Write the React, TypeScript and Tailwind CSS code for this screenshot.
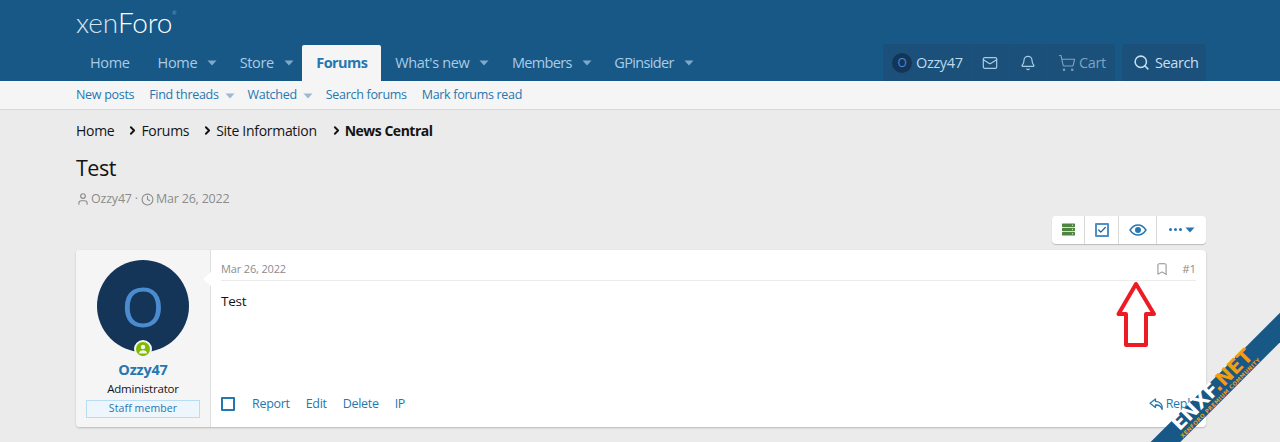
import React from "react";
import { Mail, Bell, ShoppingCart, Search, User, Clock, Bookmark, Check, ChevronRight } from "lucide-react";

const Caret = ({ className = "" }: { className?: string }) => (
  <svg viewBox="0 0 10 6" width="10" height="6" className={className} fill="currentColor"><path d="M0.5 0.5h9L5 5.5z" /></svg>
);

const NavItem = ({ label, caret, tight }: { label: string; caret?: boolean; tight?: boolean }) => (
  <div className={tight ? "flex h-[36px] items-center pl-[14px] pr-[14px] text-[14.5px] tracking-[-0.65px] text-[#a9cce6]" : "flex h-[36px] items-center pl-[14px] pr-[14px] text-[14.5px] tracking-[-0.35px] text-[#a9cce6]"}>
    <span>{label}</span>
    {caret && <Caret className="ml-[10px] mr-[-5.5px] text-[#7fa9c9]" />}
  </div>
);

const SubItem = ({ label, caret }: { label: string; caret?: boolean }) => (
  <div className="flex items-center text-[12.5px] tracking-[-0.3px] text-[#2577b1]">
    <span>{label}</span>
    {caret && <Caret className="ml-[6px] mr-[-2px] text-[#9db9d0]" />}
  </div>
);

const Crumb = ({ label, bold }: { label: string; bold?: boolean }) => (
  <div className={bold ? "ml-[1px] flex items-center" : "flex items-center"}>
    <ChevronRight size={13} strokeWidth={3.5} className="mr-[2px] text-[#141414]" />
    <span className={bold ? "font-bold tracking-[-0.5px] text-[#141414]" : "text-[#141414]"}>{label}</span>
  </div>
);

export default function App() {
  return (
    <div className="relative h-[442px] w-[1280px] overflow-hidden bg-[#ebebeb] font-['Open_Sans','Noto_Sans',sans-serif] text-[#141414]">
      <header className="bg-[#185886]">
        <div className="flex h-[45px] items-start pl-[76px] pt-[5px]">
          <div className="flex items-start font-['Lato',sans-serif] text-[28px] font-light leading-[34px] tracking-[-0.2px] text-[#d6e4ee]">
            <span>xen</span>
            <span className="text-white">Foro</span>
            <span className="mt-[5px] text-[5px] leading-[6px] text-[#c4d7e5]">®</span>
          </div>
        </div>
        <div className="flex h-[36px] items-end justify-between pl-[76px] pr-[74px]">
          <nav className="flex items-center">
            <NavItem label="Home" />
            <NavItem label="Home" caret />
            <NavItem label="Store" caret />
            <div className="flex h-[36px] items-center rounded-t-[2px] bg-[#f5f5f5] px-[14px] text-[14.5px] font-bold tracking-[-0.6px] text-[#2577b1]">Forums</div>
            <NavItem label="What's new" caret />
            <NavItem label="Members" caret tight />
            <NavItem label="GPinsider" caret tight />
          </nav>
          <div className="flex h-[37px] items-stretch gap-[7px]">
            <div className="flex rounded-t-[4px] bg-[#1a5079] text-[14.5px] tracking-[-0.35px] text-[#a9cce6]">
              <div className="flex w-[89px] items-center border-r border-[#185886]/40 pl-[9px]">
                <span className="mr-[4px] flex h-[20px] w-[20px] items-center justify-center rounded-full bg-[#153558] text-[12px] text-[#4a8ccf]">O</span>
                <span className="text-[#bcd9ee]">Ozzy47</span>
              </div>
              <div className="flex w-[37px] items-center justify-center border-r border-[#185886]/40"><Mail size={16} strokeWidth={1.8} /></div>
              <div className="flex w-[39px] items-center justify-center border-r border-[#185886]/40"><Bell size={16} strokeWidth={1.8} /></div>
              <div className="flex w-[67px] items-center gap-[3px] pl-[10px] text-[#7fa3bf]"><ShoppingCart size={18} strokeWidth={1.5} /><span>Cart</span></div>
            </div>
            <div className="flex w-[84px] items-center gap-[5px] rounded-t-[4px] bg-[#1a5079] pl-[11px] text-[14.5px] tracking-[-0.4px] text-[#c6dff1]">
              <Search size={17} strokeWidth={2.2} />
              <span>Search</span>
            </div>
          </div>
        </div>
      </header>

      <div className="flex h-[29px] items-center gap-[15px] border-b border-[#d8d8d8] bg-[#f5f5f5] pl-[76px] pt-[1px]">
        <SubItem label="New posts" />
        <SubItem label="Find threads" caret />
        <SubItem label="Watched" caret />
        <SubItem label="Search forums" />
        <SubItem label="Mark forums read" />
      </div>

      <main className="px-[76px] pr-[74px]">
        <div className="flex h-[41px] items-center gap-[12px] text-[14px] tracking-[-0.3px]">
          <span>Home</span>
          <Crumb label="Forums" />
          <Crumb label="Site Information" />
          <Crumb label="News Central" bold />
        </div>
        <h1 className="mt-[1px] text-[21.5px] leading-[32px] tracking-[-0.5px] text-[#141414]">Test</h1>
        <div className="mt-[6px] flex items-center gap-[1px] text-[12.5px] tracking-[-0.2px] text-[#8c8c8c]">
          <User size={14} strokeWidth={2} />
          <span>Ozzy47 ·</span>
          <Clock size={13} strokeWidth={2} className="ml-[2px]" />
          <span className="ml-[1px]">Mar 26, 2022</span>
        </div>

        <div className="mt-[7px] flex justify-end">
          <div className="flex h-[28px] items-stretch rounded-[4px] bg-white shadow-[0_1px_1px_rgba(0,0,0,0.2)]">
            <div className="flex w-[33px] items-center justify-center border-r border-[#d8d8d8]">
              <svg width="13" height="13" viewBox="0 0 13 13"><rect x="0" y="0.5" width="13" height="3.4" rx="0.6" fill="#4f8440" /><rect x="0" y="4.8" width="13" height="3.4" rx="0.6" fill="#4f8440" /><rect x="0" y="9.1" width="13" height="3.4" rx="0.6" fill="#4f8440" /><circle cx="10.5" cy="2.2" r="0.7" fill="#cfe3c9" /><circle cx="10.5" cy="6.5" r="0.7" fill="#cfe3c9" /><circle cx="10.5" cy="10.8" r="0.7" fill="#cfe3c9" /></svg>
            </div>
            <div className="flex w-[34px] items-center justify-center border-r border-[#d8d8d8]">
              <div className="flex h-[14px] w-[14px] items-center justify-center rounded-[1px] border-2 border-[#4f8fc8] text-[#1f5f94]"><Check size={10} strokeWidth={3} /></div>
            </div>
            <div className="flex w-[38px] items-center justify-center border-r border-[#d8d8d8]">
              <svg width="18" height="12" viewBox="0 0 18 12" fill="none"><path d="M1 6c2-3 5-5 8-5s6 2 8 5c-2 3-5 5-8 5s-6-2-8-5z" stroke="#2577b1" strokeWidth="1.4" /><circle cx="9" cy="6" r="3" fill="#2577b1" /></svg>
            </div>
            <div className="flex w-[49px] items-center justify-center gap-[3px] text-[#2577b1]">
              <svg width="13" height="3" viewBox="0 0 13 3" fill="currentColor"><circle cx="1.5" cy="1.5" r="1.5" /><circle cx="6.5" cy="1.5" r="1.5" /><circle cx="11.5" cy="1.5" r="1.5" /></svg>
              <Caret />
            </div>
          </div>
        </div>

        <article className="mt-[6px] flex h-[177px] rounded-[4px] bg-white shadow-[0_1px_2px_rgba(0,0,0,0.22)]">
          <aside className="relative flex w-[135px] shrink-0 flex-col items-center rounded-l-[4px] border-r border-[#dfdfdf] bg-[#f5f5f5] pt-[10px]">
            <div className="relative h-[92px] w-[92px] shrink-0 rounded-full bg-[#153558]">
              <div className="flex h-full w-full items-center justify-center text-[55px] leading-none text-[#4a8ccf]">O</div>
              <div className="absolute bottom-[-6px] left-[37px] flex h-[18px] w-[18px] items-center justify-center rounded-full border-2 border-[#f5f5f5] bg-[#7fb900]">
                <svg width="10" height="10" viewBox="0 0 10 10" fill="#f5f5f5"><circle cx="5" cy="3" r="2.2" /><path d="M1 9.5c0-2.2 1.8-3.2 4-3.2s4 1 4 3.2z" /></svg>
              </div>
            </div>
            <div className="mt-[8px] text-[14.5px] font-bold leading-[20px] tracking-[-0.2px] text-[#2577b1]">Ozzy47</div>
            <div className="text-[11.5px] leading-[17px] tracking-[-0.2px] text-[#141414]">Administrator</div>
            <div className="mt-[3px] flex h-[18px] w-[114px] items-center justify-center border border-[#b9dcf5] bg-[#edf6fd] text-[10.5px] tracking-[0.1px] text-[#2577b1]">Staff member</div>
            <div className="absolute right-[-1px] top-[22px] h-0 w-0 border-y-[7px] border-r-[8px] border-y-transparent border-r-white" />
          </aside>
          <div className="flex min-w-0 flex-1 flex-col px-[10px]">
            <div className="flex h-[31px] items-center justify-between border-b border-[#ebebeb] pt-[8px] text-[11px] tracking-[-0.15px] text-[#8c8c8c]">
              <span>Mar 26, 2022</span>
              <div className="flex items-center gap-[13px]">
                <Bookmark size={14} strokeWidth={1.7} />
                <span className="text-[11.5px]">#1</span>
              </div>
            </div>
            <div className="mt-[10px] text-[13.5px] leading-[20px] tracking-[-0.2px]">Test</div>
            <div className="mt-auto mb-[13px] flex items-center justify-between text-[12.5px] tracking-[-0.3px] text-[#2577b1]">
              <div className="flex items-center">
                <div className="mr-[17px] h-[14px] w-[14px] rounded-[1px] border-2 border-[#2577b1]" />
                <span className="mr-[16px]">Report</span>
                <span className="mr-[16px]">Edit</span>
                <span className="mr-[16px]">Delete</span>
                <span>IP</span>
              </div>
              <div className="flex items-center gap-[2px]">
                <svg width="15" height="13" viewBox="0 0 15 13" fill="none" stroke="currentColor" strokeWidth="1.3" strokeLinejoin="round"><path d="M6.5 1L1 5.2l5.5 4.2V7c3-.2 5.4.7 6.7 4.5.8-4.3-1.8-8-6.7-8.1z" /></svg>
                <span>Reply</span>
              </div>
            </div>
          </div>
        </article>
      </main>

      <svg className="absolute left-[1115px] top-[281px]" width="44" height="68" viewBox="0 0 44 68" fill="none">
        <path d="M21 3L3.5 33H11V64H31V33H39z" fill="white" stroke="#ed1c24" strokeWidth="4" strokeLinejoin="round" />
      </svg>

      <div className="absolute left-[1065px] top-[382px] flex h-[21px] w-[300px] rotate-[-45deg] flex-col items-center bg-[#185886] font-['DejaVu_Sans',sans-serif]">
        <div className="mt-[-2px] text-[19.5px] font-bold leading-[17px] text-white">ENXF<span className="text-[#f39c12]">.NET</span></div>
        <div className="text-[5.5px] font-bold leading-[6px] tracking-[0.35px] text-[#f39c12]">XENFORO PREMIUM COMMUNITY</div>
      </div>
    </div>
  );
}
